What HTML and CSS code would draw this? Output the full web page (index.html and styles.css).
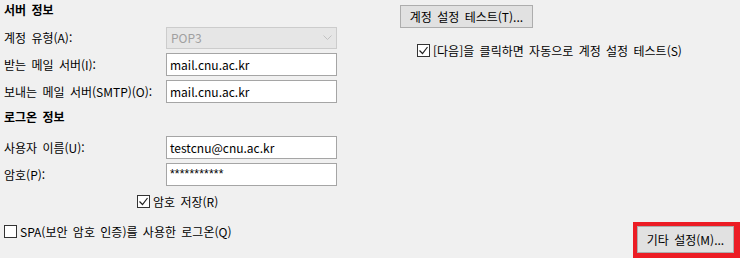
FILE: index.html
```html
<!DOCTYPE html>
<html lang="ko">
<head>
    <meta charset="UTF-8">
    <title>계정 설정</title>
    <link rel="stylesheet" href="styles.css">
</head>
<body>
    <div class="dialog">
        <div class="left">
            <div class="section">서버 정보</div>
            <div class="row first">
                <span class="label">계정 유형(A):</span>
                <div class="select">
                    <span class="select-text">POP3</span>
                    <span class="select-arrow">
                        <svg width="9" height="6" viewBox="0 0 9 6"><path d="M0.5 0.5 L4.5 4.5 L8.5 0.5" fill="none" stroke="#c2c2c2" stroke-width="1"/></svg>
                    </span>
                </div>
            </div>
            <div class="row">
                <span class="label">받는 메일 서버(I):</span>
                <div class="field">mail.cnu.ac.kr</div>
            </div>
            <div class="row">
                <span class="label">보내는 메일 서버(SMTP)(O):</span>
                <div class="field">mail.cnu.ac.kr</div>
            </div>

            <div class="section second">로그온 정보</div>
            <div class="row first">
                <span class="label">사용자 이름(U):</span>
                <div class="field">testcnu@cnu.ac.kr</div>
            </div>
            <div class="row">
                <span class="label">암호(P):</span>
                <div class="field password">***********</div>
            </div>
            <div class="check save">
                <span class="box">
                    <svg width="11" height="11" viewBox="0 0 11 11"><path d="M1.5 5.5 L4.5 8.5 L9.5 2" fill="none" stroke="#222" stroke-width="1.2"/></svg>
                </span>
                <span>암호 저장(R)</span>
            </div>
            <div class="check spa">
                <span class="box"></span>
                <span>SPA(보안 암호 인증)를 사용한 로그온(Q)</span>
            </div>
        </div>

        <div class="right">
            <div class="button test">계정 설정 테스트(T)...</div>
            <div class="check auto">
                <span class="box">
                    <svg width="11" height="11" viewBox="0 0 11 11"><path d="M1.5 5.5 L4.5 8.5 L9.5 2" fill="none" stroke="#222" stroke-width="1.2"/></svg>
                </span>
                <span>[다음]을 클릭하면 자동으로 계정 설정 테스트(S)</span>
            </div>
            <div class="more-wrap">
                <div class="highlight">
                    <div class="button more">기타 설정(M)...</div>
                </div>
            </div>
        </div>
    </div>
</body>
</html>
```

FILE: styles.css
```css
body {
    margin: 0;
    background-color: #f0f0f0;
    font-family: "Noto Sans CJK KR", "Noto Sans", sans-serif;
    font-size: 12px;
    word-spacing: 2px;
    color: #000;
}

.dialog {
    display: flex;
    height: 258px;
    overflow: hidden;
}

.left {
    width: 340px;
    padding-left: 4px;
    display: flex;
    flex-direction: column;
}

.section {
    height: 20px;
    line-height: 20px;
    font-weight: bold;
    margin-bottom: 6px;
}

.section.second {
    margin-top: 4px;
    margin-bottom: 9px;
}

.row {
    display: flex;
    align-items: center;
    height: 23px;
    margin-top: 4px;
}

.row.first {
    margin-top: 0;
}

.label {
    width: 162px;
    white-space: nowrap;
}

.field {
    box-sizing: border-box;
    width: 171px;
    height: 23px;
    line-height: 21px;
    padding-left: 3px;
    background-color: #fff;
    border: 1px solid #a5a5a5;
}

.field.password {
    font-family: "Liberation Sans", Arial, sans-serif;
    font-size: 12px;
    letter-spacing: 0.2px;
}

.select {
    box-sizing: border-box;
    width: 171px;
    height: 22px;
    display: flex;
    background-color: #e6e6e6;
    border: 1px solid #cccccc;
    color: #a0a0a0;
}

.select-text {
    flex: 1;
    line-height: 20px;
    padding-left: 4px;
}

.select-arrow {
    width: 17px;
    display: flex;
    align-items: center;
    justify-content: center;
}

.check {
    display: flex;
    align-items: center;
    height: 14px;
    white-space: nowrap;
}

.box {
    box-sizing: border-box;
    width: 13px;
    height: 13px;
    margin-right: 3px;
    background-color: #fff;
    border: 1px solid #333;
    display: flex;
    align-items: center;
    justify-content: center;
}

.check.save {
    margin-top: 8px;
    padding-left: 133px;
}

.check.spa {
    margin-top: 16px;
}

.right {
    flex: 1;
    padding-left: 56px;
    display: flex;
    flex-direction: column;
}

.button {
    box-sizing: border-box;
    background-color: #e1e1e1;
    border: 1px solid #adadad;
    text-align: center;
    white-space: nowrap;
}

.button.test {
    width: 133px;
    height: 23px;
    line-height: 21px;
    margin-top: 5px;
}

.check.auto {
    margin-top: 15px;
    padding-left: 17px;
}

.more-wrap {
    margin-top: auto;
    display: flex;
    justify-content: flex-end;
}

.highlight {
    box-sizing: border-box;
    width: 107px;
    height: 36px;
    border: 4px solid #ec1c24;
    border-right-width: 6px;
    border-bottom-width: 5px;
}

.button.more {
    height: 27px;
    line-height: 25px;
}
```
